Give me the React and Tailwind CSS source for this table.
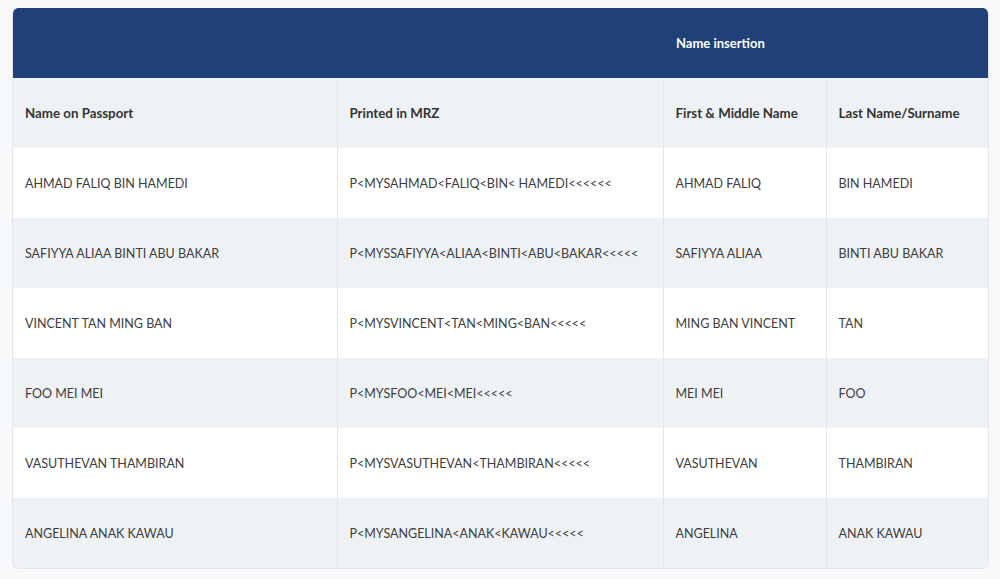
import React from "react";

const rows = [
  ["AHMAD FALIQ BIN HAMEDI", "P<MYSAHMAD<FALIQ<BIN< HAMEDI<<<<<<", "AHMAD FALIQ", "BIN HAMEDI"],
  ["SAFIYYA ALIAA BINTI ABU BAKAR", "P<MYSSAFIYYA<ALIAA<BINTI<ABU<BAKAR<<<<<", "SAFIYYA ALIAA", "BINTI ABU BAKAR"],
  ["VINCENT TAN MING BAN", "P<MYSVINCENT<TAN<MING<BAN<<<<<", "MING BAN VINCENT", "TAN"],
  ["FOO MEI MEI", "P<MYSFOO<MEI<MEI<<<<<", "MEI MEI", "FOO"],
  ["VASUTHEVAN THAMBIRAN", "P<MYSVASUTHEVAN<THAMBIRAN<<<<<", "VASUTHEVAN", "THAMBIRAN"],
  ["ANGELINA ANAK KAWAU", "P<MYSANGELINA<ANAK<KAWAU<<<<<", "ANGELINA", "ANAK KAWAU"],
];

const th = "text-left pl-[12px] pr-[13px] pt-[2px] font-bold text-[#333] text-[13.3px]";

export default function App() {
  return (
    <div className="min-h-screen bg-[#f8f9fb] px-3 pt-2 pb-2" style={{ fontFamily: "Lato, 'Open Sans', sans-serif" }}>
      <div className="w-[977px] rounded-md overflow-hidden border border-t-0 border-[#e3e6ea] bg-white">
        <table className="w-full table-fixed border-collapse text-[12.5px]">
          <colgroup>
            <col className="w-[324px]" />
            <col className="w-[326px]" />
            <col className="w-[163px]" />
            <col className="w-[162px]" />
          </colgroup>
          <thead>
            <tr className="bg-[#1f4177] h-[70px]">
              <th></th>
              <th></th>
              <th colSpan={2} className="text-left pl-[13px] pt-[2px] text-white font-bold text-[13px]">Name insertion</th>
            </tr>
            <tr className="bg-[#eff2f5] h-[70px]">
              <th className={th}>Name on Passport</th>
              <th className={`${th} border-l border-[#e3e6ea]`}>Printed in MRZ</th>
              <th className={`${th} border-l border-[#e3e6ea]`}>First &amp; Middle Name</th>
              <th className={`${th} border-l border-[#e3e6ea]`}>Last Name/Surname</th>
            </tr>
          </thead>
          <tbody>
            {rows.map((r, i) => (
              <tr key={i} className={`h-[70px] ${i % 2 === 1 ? "bg-[#eff2f5]" : "bg-white"}`}>
                {r.map((c, j) => (
                  <td key={j} className={`pl-[12px] pr-[13px] pt-[2px] text-[#3d3d3d] ${j > 0 ? "border-l border-[#e3e6ea]" : ""}`}>{c}</td>
                ))}
              </tr>
            ))}
          </tbody>
        </table>
      </div>
    </div>
  );
}
